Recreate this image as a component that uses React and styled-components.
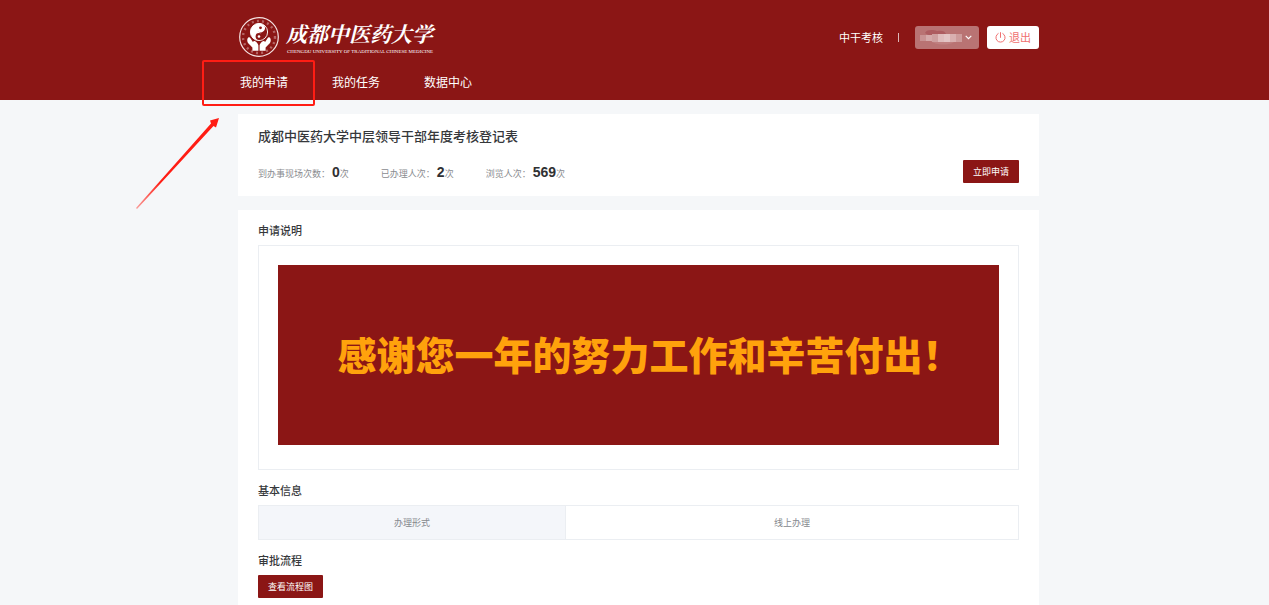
import React from "react";
import styled, { createGlobalStyle, css } from "styled-components";

const red = "#8b1615";

const GlobalStyle = createGlobalStyle`
  * { box-sizing: border-box; }
  body {
    margin: 0;
    background: #f5f7f9;
    color: #36383b;
    font-family: "Liberation Sans", "Noto Sans CJK SC", sans-serif;
    font-size: 9px;
  }
  h1, h2, p, ul, dl, dd { margin: 0; padding: 0; }
  button { font-family: inherit; cursor: pointer; }
`;

const Page = styled.div`
  min-height: 100vh;
  display: flex;
  flex-direction: column;
`;

const Header = styled.header`
  background: ${red};
  padding-left: 8px;
  color: #fff;
`;

const Container = styled.div`
  width: 100%;
  max-width: 801px;
  margin: 0 auto;
`;

const TopBar = styled.div`
  display: flex;
  align-items: center;
  justify-content: space-between;
  height: 64px;
  padding-top: 10px;
`;

const Brand = styled.a`
  display: flex;
  align-items: center;
  gap: 6px;
  color: #fff;
  text-decoration: none;
`;

const Emblem = styled.svg`
  width: 42px;
  height: 42px;
`;

const BrandText = styled.span`
  display: flex;
  flex-direction: column;
  gap: 2px;
  white-space: nowrap;
`;

const BrandName = styled.span`
  font: italic 700 21px/28px "Noto Serif CJK SC", "Noto Sans CJK SC", serif;
`;

const BrandLatin = styled.span`
  font: 400 5px/6px "Liberation Serif", serif;
  padding-left: 1px;
`;

const Account = styled.div`
  display: flex;
  align-items: center;
  font-size: 11px;
`;

const Divider = styled.span`
  width: 1px;
  height: 9px;
  margin: 0 16px 0 15px;
  background: #dcb9b9;
`;

const UserButton = styled.button`
  display: flex;
  align-items: center;
  justify-content: space-between;
  width: 64px;
  height: 23px;
  padding: 0 7px 0 5px;
  border: 0;
  border-radius: 3px;
  background: #b97373;
`;

const LogoutButton = styled.button`
  display: flex;
  align-items: center;
  justify-content: center;
  gap: 3px;
  width: 52px;
  height: 23px;
  margin-left: 8px;
  padding: 0;
  border: 0;
  border-radius: 3px;
  background: #fff;
  color: #f07070;
  font-size: 11px;
`;

const Nav = styled.nav`
  display: flex;
  gap: 44px;
  height: 36px;
  padding-left: 2px;
`;

const NavItem = styled.div`
  position: relative;
`;

const NavLink = styled.a`
  color: #fff;
  font-size: 12px;
  line-height: 38px;
  text-decoration: none;
`;

const Highlight = styled.span`
  position: absolute;
  top: -4px;
  left: -38px;
  width: 113px;
  height: 46px;
  border: 2px solid #ff1d14;
  border-radius: 2px;
  pointer-events: none;
`;

const Arrow = styled.svg`
  position: absolute;
  top: 53px;
  left: -104px;
  width: 84px;
  height: 92px;
  pointer-events: none;
`;

const Main = styled.main`
  display: flex;
  flex: 1;
  padding: 14px 0 0 8px;
`;

const Content = styled(Container)`
  display: flex;
  flex-direction: column;
  gap: 14px;
`;

const Card = styled.section`
  background: #fff;
  padding: ${(p) => (p.$fill ? "12px 20px 7px" : "14px 20px 13px")};
  ${(p) => p.$fill && css`flex: 1;`}
`;

const Title = styled.h1`
  font-size: 13px;
  font-weight: 500;
  line-height: 18px;
`;

const SummaryRow = styled.div`
  display: flex;
  align-items: center;
  justify-content: space-between;
  margin-top: 14px;
`;

const Stats = styled.dl`
  display: flex;
  gap: 32px;
  color: #8a8c90;
`;

const Stat = styled.div`
  display: flex;
  align-items: baseline;
`;

const StatValue = styled.dd`
  display: flex;
  align-items: baseline;
  margin-left: 2px;

  strong {
    color: #303133;
    font-size: 14px;
    line-height: 18px;
  }
`;

const PrimaryButton = styled.button`
  height: 23px;
  padding: 0 10px;
  border: 0;
  border-radius: 1px;
  background: ${red};
  color: #fff;
  font-size: 9px;
`;

const SectionTitle = styled.h2`
  margin: ${(p) => (p.$first ? "0" : "12px")} 0 5px;
  font-size: 11px;
  font-weight: 500;
  line-height: 18px;
`;

const NoticeBox = styled.div`
  border: 1px solid #ebeef2;
  padding: 19px 19px 24px;
`;

const Banner = styled.p`
  display: flex;
  align-items: center;
  justify-content: center;
  height: 180px;
  padding: 0 0 4px 22px;
  background: ${red};
  color: #ffa20c;
  font-family: "Noto Sans CJK SC", sans-serif;
  font-size: 39px;
  font-weight: 900;
  white-space: nowrap;
`;

const InfoTable = styled.table`
  width: 100%;
  height: 35px;
  border-collapse: collapse;
  table-layout: fixed;
  color: #85888e;

  th, td {
    border: 1px solid #ebeef2;
    padding: 0;
    font-weight: 400;
    text-align: center;
  }
  th {
    width: 307px;
    background: #f4f6fa;
  }
`;

const navItems = ["我的申请", "我的任务", "数据中心"];
const stats = [
  ["到办事现场次数：", "0"],
  ["已办理人次：", "2"],
  ["浏览人次：", "569"],
];
const blurTones = ["#c99393", "#d5aaaa", "#cea0a0", "#dfbcbc", "#e3c5c5", "#d9b0b0", "#cd9b9b"];

function UniversityEmblem() {
  return (
    <Emblem viewBox="0 0 42 42" aria-hidden="true">
      <circle cx="21" cy="21" r="19.3" fill="none" stroke="#f5e3e3" strokeWidth="1.2" />
      <circle cx="21" cy="21" r="16" fill="none" stroke="#d9a5a5" strokeWidth="2.4" strokeDasharray="2 3.2" opacity=".55" />
      <circle cx="21" cy="16" r="8.6" fill={red} stroke="#fff" strokeWidth=".9" />
      <path d="M21 7.400a8.600 8.600 0 0 0 0 17.200c2.600 0 4.600-1.900 4.600-4.300S23.400 16.200 21 16s-3.600-2-3.600-4.300S19 7.800 21 7.400z" fill="#fff" transform="rotate(24 21 16)" />
      <path d="M21 7.400c2.800 0 4.300 2 4.300 4.300S23.500 16 21 16s-4.600-1-4.600-4.300S18.500 7.400 21 7.400z" fill="#fff" transform="rotate(24 21 16)" />
      <circle cx="22.500" cy="11.800" r="1.400" fill={red} />
      <circle cx="21" cy="20.500" r="3.400" fill={red} />
      <circle cx="21" cy="20.500" r="1.300" fill="#fff" />
      <path d="M10.3 21.5c1-.8 1.8 0 2.3 1l2.3 3.4 1-.8c1.4-.8 4.5 2.7 4.5 4.4v5.2h-6v-3.2l-4.4-4.6c-1.1-1.5-1-4.4.3-5.4z" fill="#fff" />
      <path d="M31.7 21.5c-1-.8-1.8 0-2.3 1l-2.3 3.4-1-.8c-1.4-.8-4.5 2.7-4.5 4.400v5.2h6v-3.2l4.4-4.6c1.1-1.5 1-4.4-.3-5.4z" fill="#fff" />
    </Emblem>
  );
}

export default function App() {
  return (
    <Page>
      <GlobalStyle />
      <Header>
        <Container>
          <TopBar>
            <Brand href="#">
              <UniversityEmblem />
              <BrandText>
                <BrandName>成都中医药大学</BrandName>
                <BrandLatin>CHENGDU UNIVERSITY OF TRADITIONAL CHINESE MEDICINE</BrandLatin>
              </BrandText>
            </Brand>
            <Account>
              <span>中干考核</span>
              <Divider />
              <UserButton type="button" aria-label="用户菜单">
                <svg width="42" height="17" viewBox="0 0 42 17" aria-hidden="true">
                  <path d="M5 4c2-4 9-3 12-2 5-1 8 0 9 3-5 3-16 3-21-1z" fill="#ad5c60" />
                  <path d="M10 11c9-2 19-2 26 0-3 6-22 6-26 0z" fill="#c08080" />
                  {blurTones.map((tone, i) => (
                    <rect key={i} x={i * 6} y={i < 2 ? 6 : 5} width="6" height={i < 2 ? 6 : 8} fill={tone} />
                  ))}
                </svg>
                <svg width="7" height="5" viewBox="0 0 7 5" aria-hidden="true">
                  <path d="M.7.9l2.8 2.8L6.3.9" fill="none" stroke="#fff" strokeWidth="1.1" />
                </svg>
              </UserButton>
              <LogoutButton type="button">
                <svg width="11" height="11" viewBox="0 0 11 11" fill="none" stroke="currentColor" strokeLinecap="round" aria-hidden="true">
                  <path d="M3.2 1.500a4.600 4.600 0 1 0 4.600 0M5.500.6v4.800" />
                </svg>
                退出
              </LogoutButton>
            </Account>
          </TopBar>
          <Nav>
            {navItems.map((label, i) => (
              <NavItem key={label}>
                <NavLink href="#">{label}</NavLink>
                {i === 0 && (
                  <>
                    <Highlight />
                    <Arrow viewBox="0 0 84 92" aria-hidden="true">
                      <defs>
                        <linearGradient id="fade" x1="0" y1="1" x2="1" y2="0">
                          <stop offset="0" stopColor="#ff1d14" stopOpacity=".4" />
                          <stop offset=".3" stopColor="#ff1d14" />
                        </linearGradient>
                      </defs>
                      <path d="M0 91 75 6.500 74 3.500 83 1 80 10.500 77.500 9 1 92z" fill="url(#fade)" />
                    </Arrow>
                  </>
                )}
              </NavItem>
            ))}
          </Nav>
        </Container>
      </Header>
      <Main>
        <Content>
          <Card>
            <Title>成都中医药大学中层领导干部年度考核登记表</Title>
            <SummaryRow>
              <Stats>
                {stats.map(([label, value]) => (
                  <Stat key={label}>
                    <dt>{label}</dt>
                    <StatValue>
                      <strong>{value}</strong>次
                    </StatValue>
                  </Stat>
                ))}
              </Stats>
              <PrimaryButton type="button">立即申请</PrimaryButton>
            </SummaryRow>
          </Card>
          <Card $fill>
            <SectionTitle $first>申请说明</SectionTitle>
            <NoticeBox>
              <Banner>感谢您一年的努力工作和辛苦付出！</Banner>
            </NoticeBox>
            <SectionTitle>基本信息</SectionTitle>
            <InfoTable>
              <tbody>
                <tr>
                  <th scope="row">办理形式</th>
                  <td>线上办理</td>
                </tr>
              </tbody>
            </InfoTable>
            <SectionTitle>审批流程</SectionTitle>
            <PrimaryButton type="button">查看流程图</PrimaryButton>
          </Card>
        </Content>
      </Main>
    </Page>
  );
}
